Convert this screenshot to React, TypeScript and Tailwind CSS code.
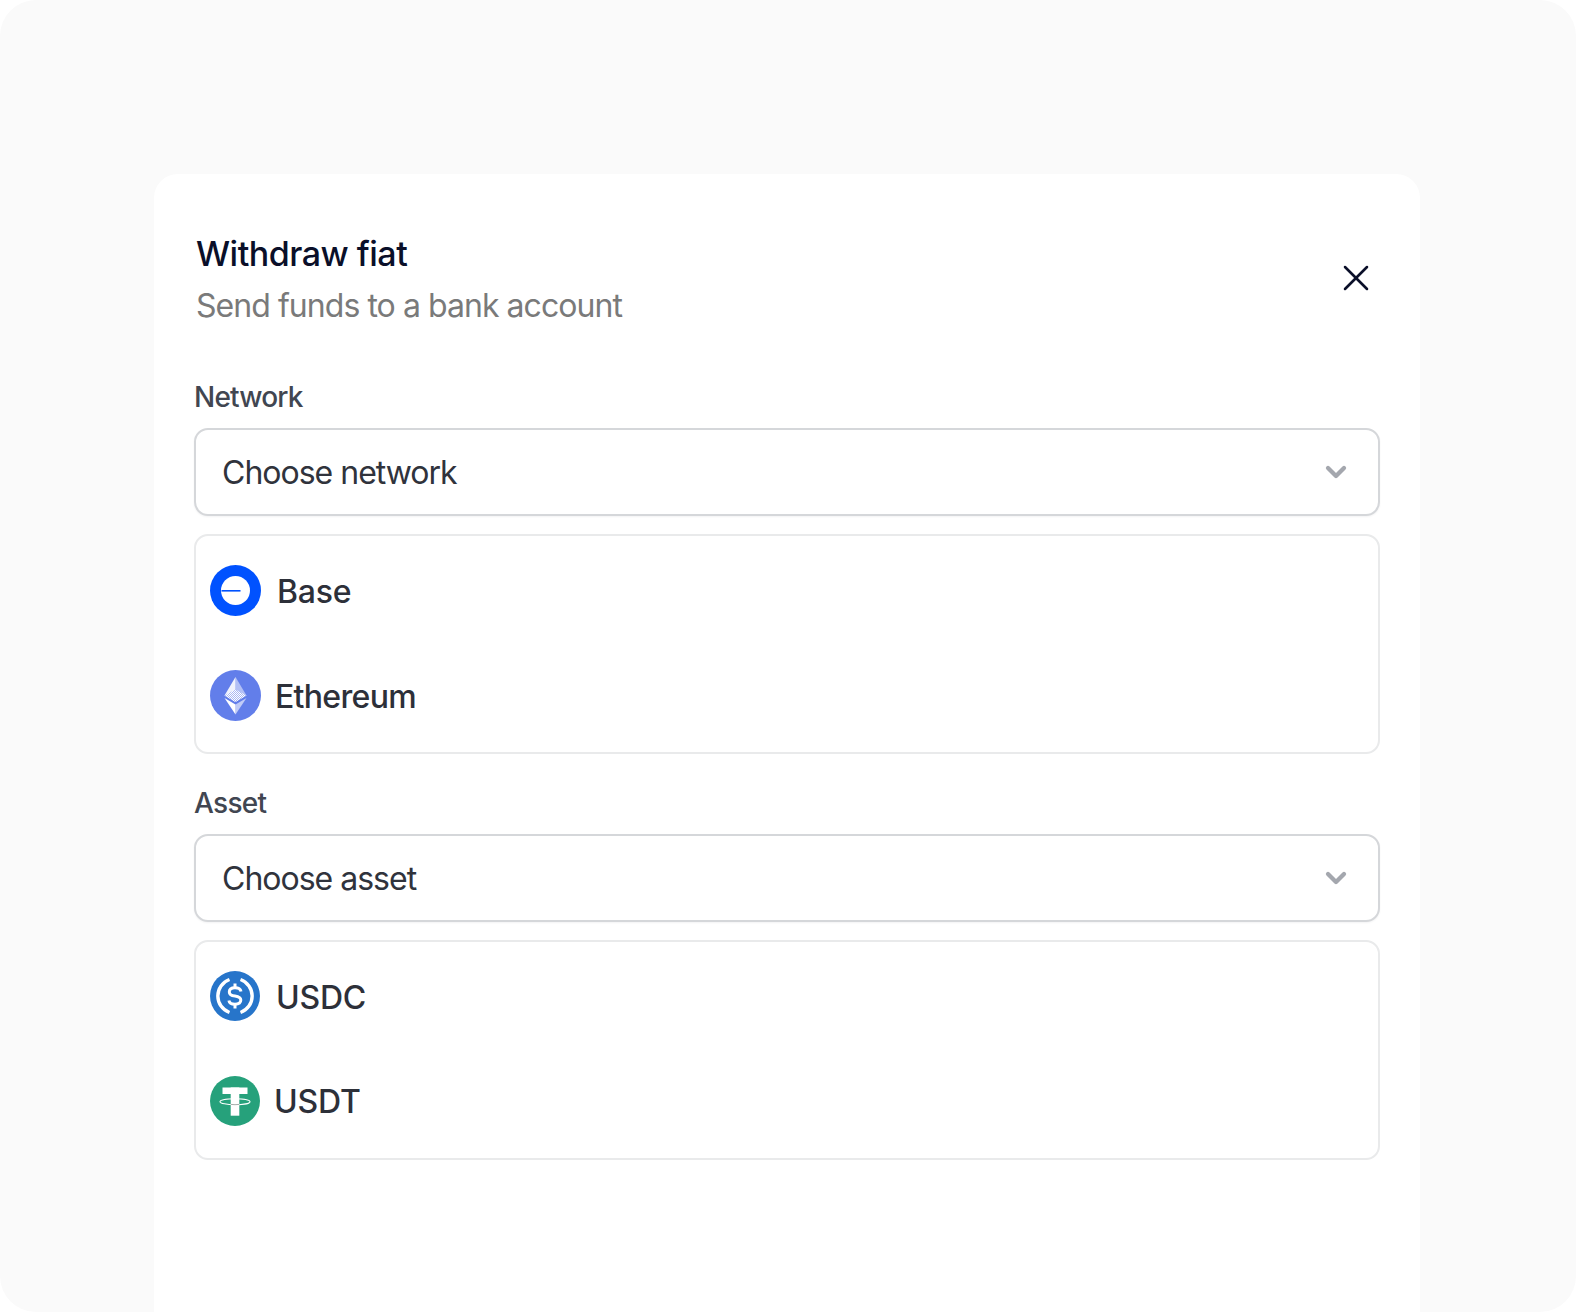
import React from 'react';
import { X, ChevronDown } from 'lucide-react';

const BaseIcon = () => (
  <svg width="51" height="51" viewBox="0 0 51 51">
    <circle cx="25.5" cy="25.5" r="25.5" fill="#0052ff" />
    <circle cx="25.5" cy="25.5" r="14.5" fill="#fff" />
    <rect x="11.5" y="25" width="19" height="1.6" fill="#0052ff" />
  </svg>
);

const EthIcon = () => (
  <svg width="51" height="51" viewBox="0 0 51 51">
    <defs>
      <pattern id="dither" width="2" height="2" patternUnits="userSpaceOnUse">
        <rect width="2" height="2" fill="#fff" />
        <rect width="1" height="1" fill="#a9b8f3" />
        <rect x="1" y="1" width="1" height="1" fill="#a9b8f3" />
      </pattern>
    </defs>
    <circle cx="25.5" cy="25.5" r="25.5" fill="#627eea" />
    <path d="M25.5 7 L14.5 25.5 L25.5 32 Z" fill="#fff" fillOpacity="0.9" />
    <path d="M25.5 7 L36.5 25.5 L25.5 32 Z" fill="#fff" fillOpacity="0.5" />
    <path d="M25.5 19.5 L14.5 25.5 L25.5 32 L36.5 25.5 Z" fill="url(#dither)" />
    <path d="M14.5 28 L25.5 44.5 L25.5 34.5 Z" fill="#fff" />
    <path d="M36.5 28 L25.5 44.5 L25.5 34.5 Z" fill="#fff" fillOpacity="0.6" />
  </svg>
);

const UsdcIcon = () => (
  <svg width="50" height="50" viewBox="0 0 50 50">
    <circle cx="25" cy="25" r="25" fill="#2775ca" />
    <path d="M19.5 8.5 A17.5 17.5 0 0 0 19.5 41.5" fill="none" stroke="#fff" strokeWidth="3.4" />
    <path d="M30.5 8.5 A17.5 17.5 0 0 1 30.5 41.5" fill="none" stroke="#fff" strokeWidth="3.4" />
    <path
      d="M31 20.5 C30.5 17.8 28.3 16.8 25 16.8 C21.5 16.8 19.3 18.4 19.3 20.9 C19.3 23.7 21.8 24.6 25 25 C28.4 25.5 30.8 26.3 30.8 29.1 C30.8 31.7 28.4 33.2 25 33.2 C21.4 33.2 19.3 32 18.9 29.4"
      fill="none"
      stroke="#fff"
      strokeWidth="3"
    />
    <rect x="23.5" y="12.5" width="3" height="5" fill="#fff" />
    <rect x="23.5" y="32.5" width="3" height="5" fill="#fff" />
  </svg>
);

const UsdtIcon = () => (
  <svg width="50" height="50" viewBox="0 0 50 50">
    <circle cx="25" cy="25" r="25" fill="#26a17b" />
    <rect x="12.5" y="11.5" width="25" height="6.5" fill="#fff" />
    <rect x="20.7" y="11.5" width="8.6" height="28.2" fill="#fff" />
    <ellipse cx="25" cy="25.7" rx="15" ry="3" fill="none" stroke="#fff" strokeWidth="1.1" />
    <path d="M20.7 28.4 Q25 29 29.3 28.4" fill="none" stroke="#9aa5a1" strokeWidth="0.9" />
  </svg>
);

const Select = ({ placeholder }: { placeholder: string }) => (
  <div className="flex h-[88px] items-center justify-between rounded-[14px] border-2 border-[#d5d7da] bg-white pl-[26px] pr-[26px] shadow-[0_1px_2px_rgba(16,24,40,0.05)]">
    <span className="pt-[2px] text-[32px] tracking-[-1px] text-[#30333c]">{placeholder}</span>
    <ChevronDown size={32} strokeWidth={3.2} className="text-[#a4a7ae]" />
  </div>
);

const Option = ({ icon, label, className }: { icon: React.ReactNode; label: string; className: string }) => (
  <div className="flex h-[52px] items-center">
    {icon}
    <span className={`${className} text-[32px] font-medium text-[#2d3039]`}>{label}</span>
  </div>
);

export default function App() {
  return (
    <div className="h-[1312px] w-[1576px] bg-white font-['Inter',sans-serif]">
      <div className="flex h-full justify-center overflow-hidden rounded-[36px] bg-[#fafafa] pl-[154px] pr-[156px] pt-[174px]">
        <div className="h-full w-full rounded-t-[24px] bg-white pl-[40px] pr-[40px] pt-[58px]">
          <div className="flex items-start justify-between pr-[2px]">
            <div className="pl-[2px]">
              <h2 className="text-[34px] leading-[44px] font-medium tracking-[-0.5px] text-[#0a0f29]">Withdraw fiat</h2>
              <p className="mt-[8px] text-[32px] leading-[44px] tracking-[-0.95px] text-[#7a7a7a]">Send funds to a bank account</p>
            </div>
            <X size={44} strokeWidth={1.4} className="mt-[24px] text-[#0a0f29]" />
          </div>

          <label className="mt-[51px] block text-[28px] leading-[36px] font-medium tracking-[-0.8px] text-[#414651]">Network</label>
          <div className="mt-[13px]">
            <Select placeholder="Choose network" />
          </div>
          <div className="mt-[18px] flex flex-col gap-[53px] rounded-[14px] border-2 border-[#e9eaeb] pl-[14px] pt-[28px] pb-[31px]">
            <Option icon={<BaseIcon />} label="Base" className="ml-[16px] pt-[4px] tracking-[-0.2px]" />
            <Option icon={<EthIcon />} label="Ethereum" className="ml-[14px] pt-[3px] tracking-[-0.7px]" />
          </div>

          <label className="mt-[31px] block text-[28px] leading-[36px] font-medium tracking-[-0.7px] text-[#414651]">Asset</label>
          <div className="mt-[13px]">
            <Select placeholder="Choose asset" />
          </div>
          <div className="mt-[18px] flex flex-col gap-[53px] rounded-[14px] border-2 border-[#e9eaeb] pl-[14px] pt-[28px] pb-[31px]">
            <Option icon={<UsdcIcon />} label="USDC" className="ml-[16px] pt-[3px] tracking-[-0.2px]" />
            <Option icon={<UsdtIcon />} label="USDT" className="ml-[14px] pt-[2px] tracking-[-0.2px]" />
          </div>
        </div>
      </div>
    </div>
  );
}
